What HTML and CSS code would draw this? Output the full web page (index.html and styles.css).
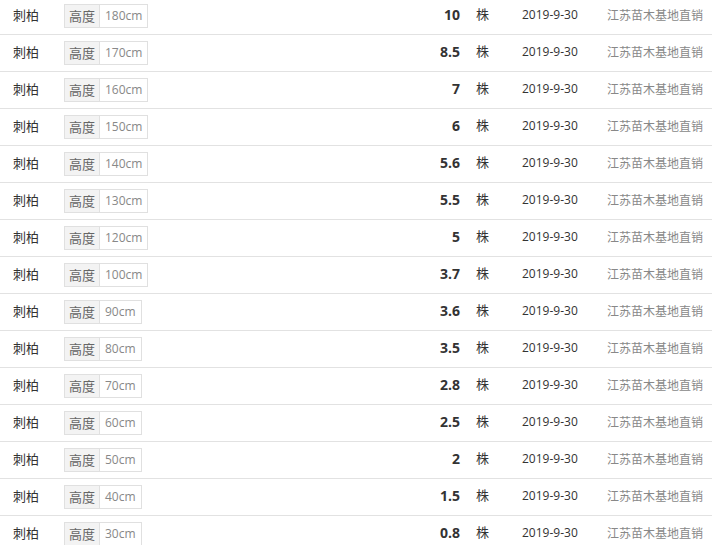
FILE: index.html
```html
<!DOCTYPE html>
<html lang="zh-CN">
<head>
<meta charset="utf-8">
<title>价格列表</title>
<link rel="stylesheet" href="styles.css">
</head>
<body>
<div class="list">
  <div class="row"><span class="name">刺柏</span><span class="spec"><span class="spec-k">高度</span><span class="spec-v">180cm</span></span><span class="price">10</span><span class="unit">株</span><span class="date">2019-9-30</span><span class="src">江苏苗木基地直销</span></div>
  <div class="row"><span class="name">刺柏</span><span class="spec"><span class="spec-k">高度</span><span class="spec-v">170cm</span></span><span class="price">8.5</span><span class="unit">株</span><span class="date">2019-9-30</span><span class="src">江苏苗木基地直销</span></div>
  <div class="row"><span class="name">刺柏</span><span class="spec"><span class="spec-k">高度</span><span class="spec-v">160cm</span></span><span class="price">7</span><span class="unit">株</span><span class="date">2019-9-30</span><span class="src">江苏苗木基地直销</span></div>
  <div class="row"><span class="name">刺柏</span><span class="spec"><span class="spec-k">高度</span><span class="spec-v">150cm</span></span><span class="price">6</span><span class="unit">株</span><span class="date">2019-9-30</span><span class="src">江苏苗木基地直销</span></div>
  <div class="row"><span class="name">刺柏</span><span class="spec"><span class="spec-k">高度</span><span class="spec-v">140cm</span></span><span class="price">5.6</span><span class="unit">株</span><span class="date">2019-9-30</span><span class="src">江苏苗木基地直销</span></div>
  <div class="row"><span class="name">刺柏</span><span class="spec"><span class="spec-k">高度</span><span class="spec-v">130cm</span></span><span class="price">5.5</span><span class="unit">株</span><span class="date">2019-9-30</span><span class="src">江苏苗木基地直销</span></div>
  <div class="row"><span class="name">刺柏</span><span class="spec"><span class="spec-k">高度</span><span class="spec-v">120cm</span></span><span class="price">5</span><span class="unit">株</span><span class="date">2019-9-30</span><span class="src">江苏苗木基地直销</span></div>
  <div class="row"><span class="name">刺柏</span><span class="spec"><span class="spec-k">高度</span><span class="spec-v">100cm</span></span><span class="price">3.7</span><span class="unit">株</span><span class="date">2019-9-30</span><span class="src">江苏苗木基地直销</span></div>
  <div class="row"><span class="name">刺柏</span><span class="spec"><span class="spec-k">高度</span><span class="spec-v">90cm</span></span><span class="price">3.6</span><span class="unit">株</span><span class="date">2019-9-30</span><span class="src">江苏苗木基地直销</span></div>
  <div class="row"><span class="name">刺柏</span><span class="spec"><span class="spec-k">高度</span><span class="spec-v">80cm</span></span><span class="price">3.5</span><span class="unit">株</span><span class="date">2019-9-30</span><span class="src">江苏苗木基地直销</span></div>
  <div class="row"><span class="name">刺柏</span><span class="spec"><span class="spec-k">高度</span><span class="spec-v">70cm</span></span><span class="price">2.8</span><span class="unit">株</span><span class="date">2019-9-30</span><span class="src">江苏苗木基地直销</span></div>
  <div class="row"><span class="name">刺柏</span><span class="spec"><span class="spec-k">高度</span><span class="spec-v">60cm</span></span><span class="price">2.5</span><span class="unit">株</span><span class="date">2019-9-30</span><span class="src">江苏苗木基地直销</span></div>
  <div class="row"><span class="name">刺柏</span><span class="spec"><span class="spec-k">高度</span><span class="spec-v">50cm</span></span><span class="price">2</span><span class="unit">株</span><span class="date">2019-9-30</span><span class="src">江苏苗木基地直销</span></div>
  <div class="row"><span class="name">刺柏</span><span class="spec"><span class="spec-k">高度</span><span class="spec-v">40cm</span></span><span class="price">1.5</span><span class="unit">株</span><span class="date">2019-9-30</span><span class="src">江苏苗木基地直销</span></div>
  <div class="row"><span class="name">刺柏</span><span class="spec"><span class="spec-k">高度</span><span class="spec-v">30cm</span></span><span class="price">0.8</span><span class="unit">株</span><span class="date">2019-9-30</span><span class="src">江苏苗木基地直销</span></div>
</div>
</body>
</html>
```
FILE: styles.css
```css
html, body {
  margin: 0;
  padding: 0;
  background: #fff;
}
body {
  font-family: "Open Sans", "Noto Sans CJK SC", sans-serif;
  color: #333;
  font-size: 13px;
  overflow: hidden;
}
.list {
  margin-top: -2px;
}
.row {
  display: grid;
  grid-template-columns: 64px 336px 60px 62px 85px 105px;
  grid-template-rows: 36px;
  align-items: center;
  height: 36px;
  border-bottom: 1px solid #e2e2e2;
  white-space: nowrap;
}
.row > span {
  line-height: 20px;
  margin-bottom: 2px;
}
.name {
  padding-left: 13px;
  font-family: "Noto Sans CJK SC", sans-serif;
  font-size: 13px;
  color: #333;
}
.row > .spec {
  display: inline-flex;
  justify-self: start;
  height: 22px;
  margin-bottom: 0;
  border: 1px solid #e0e0e0;
  font-size: 12px;
  line-height: 22px;
}
.spec-k {
  width: 34px;
  text-align: center;
  background: #f3f3f3;
  border-right: 1px solid #e0e0e0;
  color: #666;
  font-family: "Noto Sans CJK SC", sans-serif;
  font-size: 13px;
}
.spec-v {
  padding: 0 5px;
  color: #888;
}
.price {
  text-align: right;
  font-weight: 700;
  font-size: 14px;
  color: #333;
}
.row > .unit {
  padding-left: 16px;
  margin-bottom: 5px;
  font-family: "Noto Sans CJK SC", sans-serif;
  font-size: 13px;
}
.date {
  font-size: 12px;
  color: #333;
}
.src {
  font-family: "Noto Sans CJK SC", sans-serif;
  font-size: 12px;
  color: #888;
}
```
